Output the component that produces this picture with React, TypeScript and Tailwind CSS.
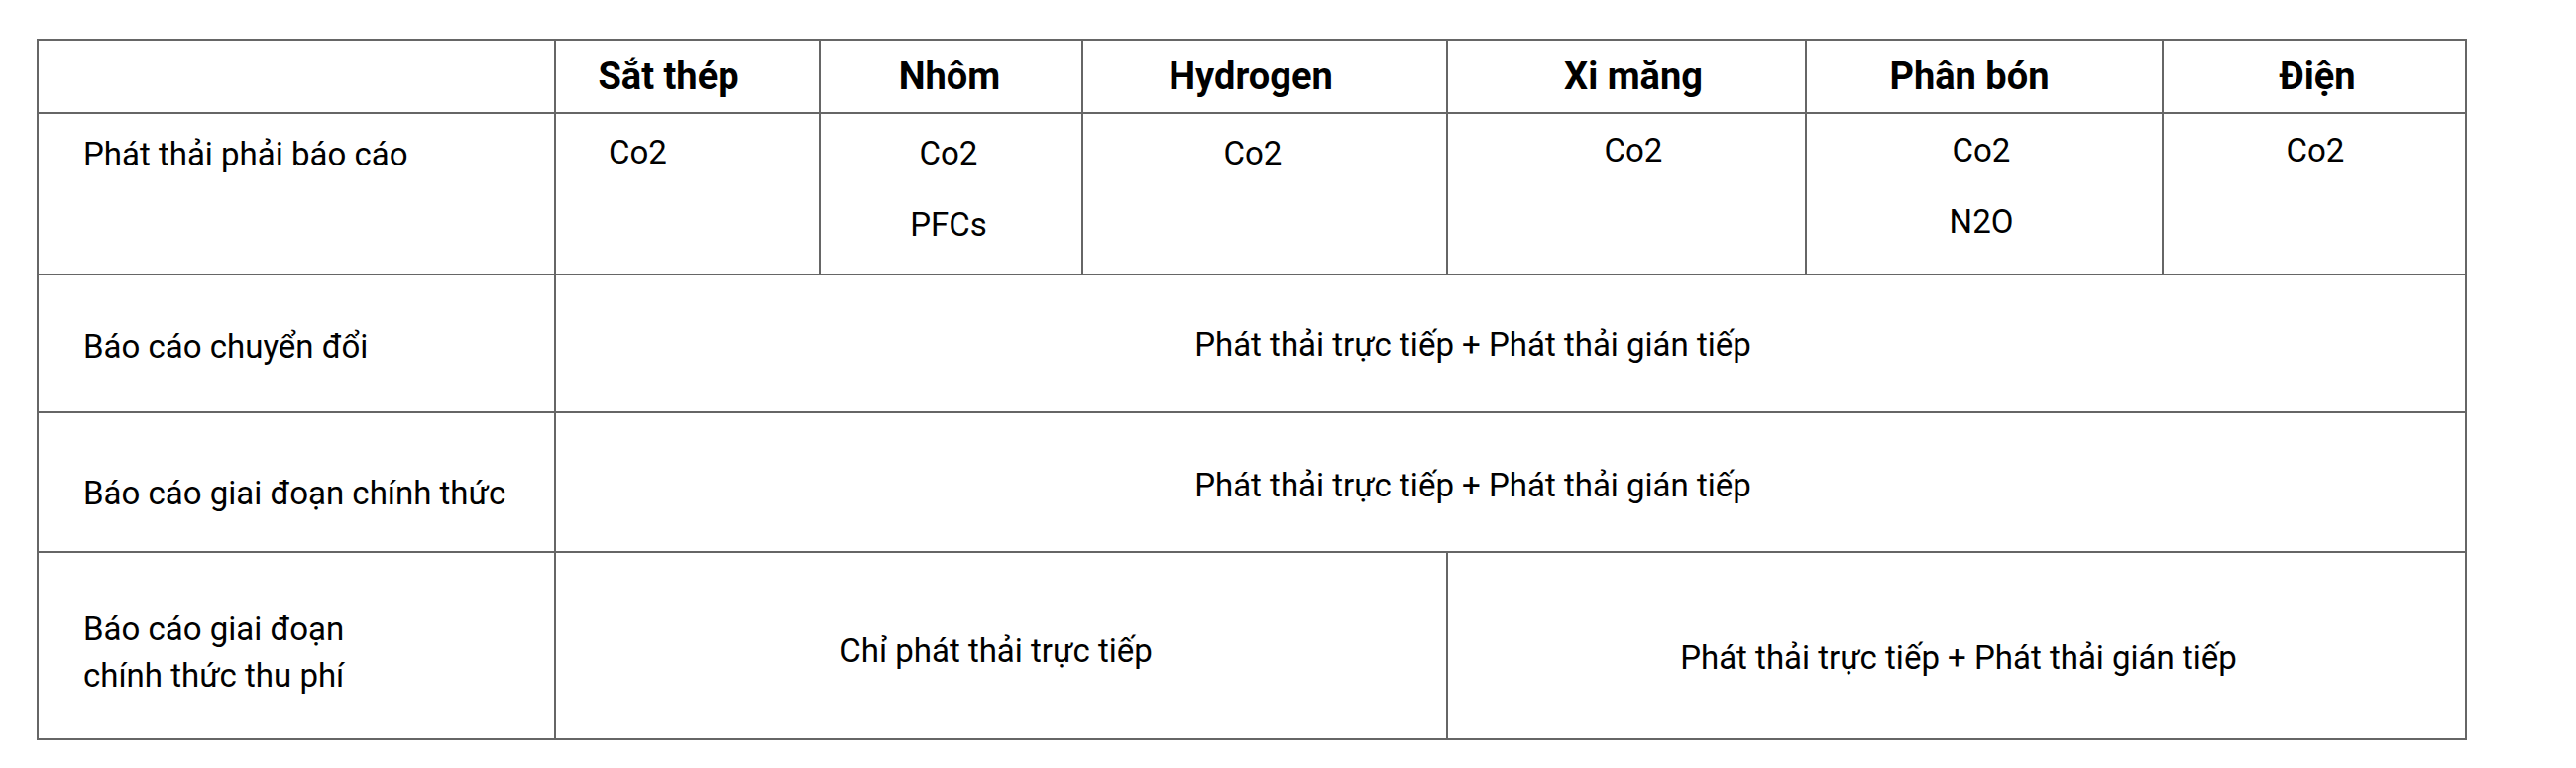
const font = { fontFamily: "Roboto, 'Noto Sans', sans-serif" };

const sectors = [
  { name: "Sắt thép", pad: "pr-[38px]" },
  { name: "Nhôm", pad: "pr-[3px]" },
  { name: "Hydrogen", pad: "pr-[28px]" },
  { name: "Xi măng", pad: "pl-[14px]" },
  { name: "Phân bón", pad: "pr-[30px]" },
  { name: "Điện", pad: "pl-[6px]" },
];
const colWidths = ["w-[522px]", "w-[267px]", "w-[265px]", "w-[368px]", "w-[362px]", "w-[360px]", "w-[306px]"];

const cell = "border-2 border-[#666666] text-[33px] leading-[39px] text-black";

export default function App() {
  return (
    <div className="bg-white w-[2599px] h-[775px] pl-[37px] pt-[39px]" style={font}>
      <table className="table-fixed border-collapse w-[2452px]">
        <colgroup>
          {colWidths.map((w, i) => (
            <col key={i} className={w} />
          ))}
        </colgroup>
        <tbody>
          {/* header */}
          <tr className="h-[74px]">
            <td className={cell} />
            {sectors.map((s) => (
              <td
                key={s.name}
                className={`${cell} ${s.pad} text-center align-middle font-bold text-[38px] leading-[44px]`}
              >
                {s.name}
              </td>
            ))}
          </tr>

          {/* reported emissions */}
          <tr className="h-[163px]">
            <td className={`${cell} align-top pl-[45px] pt-[21px]`}>Phát thải phải báo cáo</td>
            <td className={`${cell} align-top pl-[53px] pt-[19px]`}>Co2</td>
            <td className={`${cell} align-top text-center pt-[20px] pr-[5px]`}>
              <p>Co2</p>
              <p className="mt-[33px]">PFCs</p>
            </td>
            <td className={`${cell} align-top text-center pt-[20px] pr-[24px]`}>Co2</td>
            <td className={`${cell} align-top text-center pt-[17px] pl-[14px]`}>Co2</td>
            <td className={`${cell} align-top text-center pt-[17px] pr-[6px]`}>
              <p>Co2</p>
              <p className="mt-[33px]">N2O</p>
            </td>
            <td className={`${cell} align-top text-center pt-[17px] pl-[2px]`}>Co2</td>
          </tr>

          <tr className="h-[139px]">
            <td className={`${cell} align-middle pl-[45px] pt-[6px]`}>Báo cáo chuyển đổi</td>
            <td colSpan={6} className={`${cell} text-center align-middle pr-[76px] pt-[2px]`}>
              Phát thải trực tiếp + Phát thải gián tiếp
            </td>
          </tr>

          <tr className="h-[141px]">
            <td className={`${cell} align-middle pl-[45px] pt-[21px]`}>Báo cáo giai đoạn chính thức</td>
            <td colSpan={6} className={`${cell} text-center align-middle pr-[76px] pt-[5px]`}>
              Phát thải trực tiếp + Phát thải gián tiếp
            </td>
          </tr>

          <tr className="h-[189px]">
            <td className={`${cell} align-middle pl-[45px] pt-[12px]`}>
              <p>Báo cáo giai đoạn</p>
              <p className="mt-[8px]">chính thức thu phí</p>
            </td>
            <td colSpan={3} className={`${cell} text-center align-middle pr-[10px] pt-[10px]`}>
              Chỉ phát thải trực tiếp
            </td>
            <td colSpan={3} className={`${cell} text-center align-middle pl-[4px] pt-[23px]`}>
              Phát thải trực tiếp + Phát thải gián tiếp
            </td>
          </tr>
        </tbody>
      </table>
    </div>
  );
}
